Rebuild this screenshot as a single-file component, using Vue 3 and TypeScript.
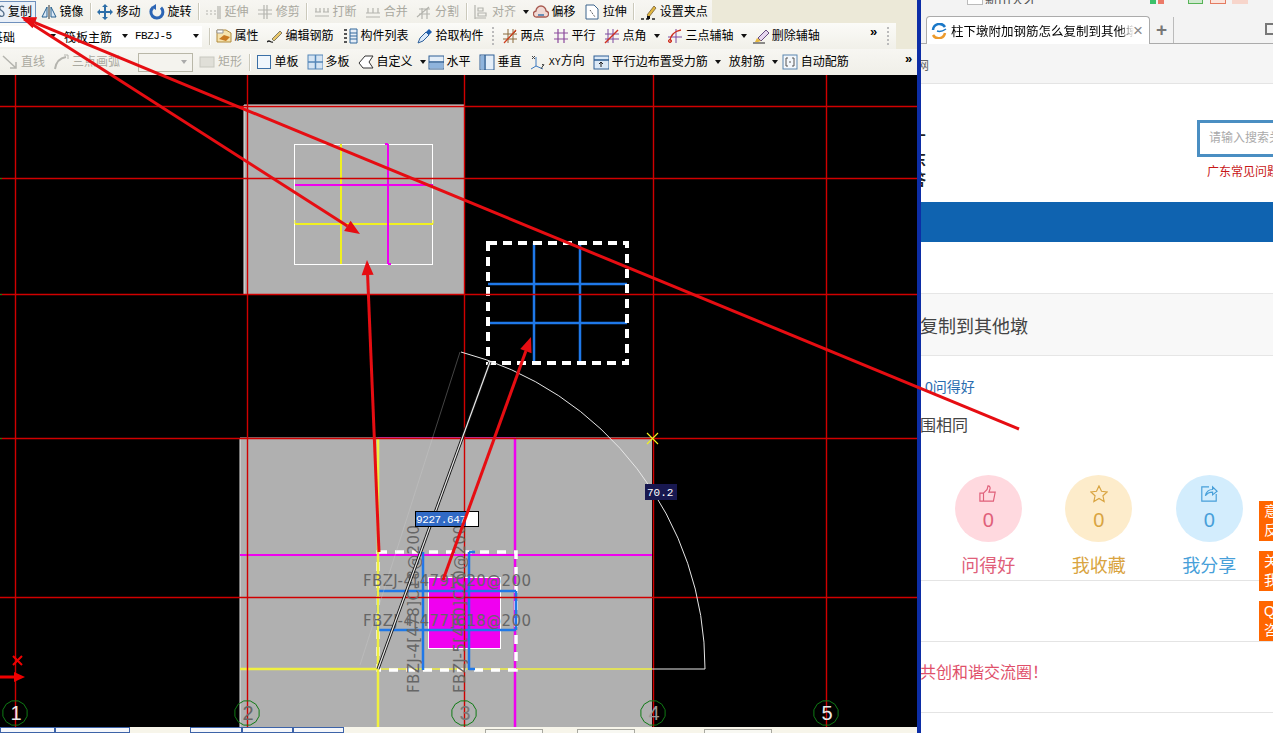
<script setup lang="ts">
interface Tool { t?: string; pre?: string; i?: string; off?: boolean; caret?: number; sep?: boolean; grip?: boolean; active?: boolean }

const G = 'fill="none" stroke="#b4b4ae" stroke-width="1.2"'
const icons: Record<string, string> = {
  copy: `<path d="M15 3c-3-2-5 0-4 2s4 2 4 5-3 3-5 1" fill="none" stroke="#56708c" stroke-width="1.4"/>`,
  mirror: `<path d="M8 1v14" stroke="#333"/><path d="M6 3v10H1z" fill="#dbe8f6" stroke="#26608f"/><path d="M10 3v10h5z" fill="#dbe8f6" stroke="#26608f"/>`,
  move: `<path d="M8 1v14M1 8h14" stroke="#2d6ea8" stroke-width="2"/><path d="M8 0l3 3H5zM8 16l3-3H5zM0 8l3-3v6zM16 8l-3-3v6z" fill="#2d6ea8"/>`,
  rotate: `<path d="M4 3.5a6 6 0 1 0 8 .2" fill="none" stroke="#2c65b4" stroke-width="3"/><path d="M7 0v6L2.5 3z" fill="#2c65b4"/>`,
  extend: `<path d="M1 7h2M5 7h2M9 7h2M1 10h2M5 10h2M9 10h2M13 2v13M15 2v13" ${G}/>`,
  trim: `<path d="M7 1v14M10 1v14M1 6h14M1 10h14" ${G}/>`,
  break: `<path d="M2 4v4M6 4v4M1 8h6M10 4v4M14 4v4M9 8h6M1 12h14" ${G}/>`,
  merge: `<path d="M3 4v5M8 4v5M13 4v5M1 9h14M1 13h14" ${G}/>`,
  split: `<path d="M1 13L13 3M3 5h11M3 10h11M6 15V4M11 15V4" ${G}/>`,
  align: `<path d="M2 1v14M2 14h11M5 4h5v3H5zM5 9h8v3H5z" ${G}/>`,
  offset: `<path d="M4 13a3 3 0 0 1-1-6 5 5 0 0 1 10 0 3 3 0 0 1-1 6z" fill="#f0d9d4" stroke="#a85a50" stroke-width="1.3"/><path d="M5 11h6" stroke="#2d6ea8" stroke-width="1.4"/>`,
  stretch: `<path d="M2 1h8l4 4v10H2z" fill="#fff" stroke="#3c648c"/><path d="M6 6l5 7" stroke="#333" stroke-dasharray="1 1"/>`,
  grip: `<path d="M6 11L13 2l2 2-7 9z" fill="#e2b73e" stroke="#76603a" stroke-width=".8"/><path d="M0 15h3M5 15h3M11 15h3" stroke="#222" stroke-width="1.4"/><rect x="6" y="12" width="3" height="3" fill="#111"/>`,
  attr: `<path d="M1 2h9l5 3v9H1z" fill="#f6e3ae" stroke="#b18a3a"/><path d="M3 11l5-4 6 2-4 4z" fill="#c97a22"/><path d="M1 2h6v3H1z" fill="#fff" stroke="#999"/>`,
  edit: `<path d="M5 11l8-8 2 2-8 8z" fill="#e8c66a" stroke="#665" stroke-width=".8"/><path d="M0 14c3-3 3 1 6 0" fill="none" stroke="#222" stroke-width="1.3"/>`,
  list: `<path d="M2 2h3M2 6h3M2 10h3M2 14h3" stroke="#555" stroke-width="2"/><path d="M8 1h7v14H8z" fill="#e6eef7" stroke="#33689c"/><path d="M8 5h7M8 8h7M8 11h7" stroke="#33689c"/>`,
  pick: `<path d="M1 15l2-5 6-6 3 3-6 6z" fill="#dbeafa" stroke="#2d5f9a"/><path d="M9 4l3-3 3 3-3 3z" fill="#1f5fb0"/>`,
  two: `<path d="M3 14L14 3M6 1v14M11 1v14M1 6h14M1 11h14" stroke="#8a6a3c"/><path d="M2 15L14 2" stroke="#d04020" stroke-width="1.2"/>`,
  para: `<path d="M5 1v14M11 1v14M1 5h14M1 11h14" stroke="#8b4a9c" stroke-width="1.2"/>`,
  angle: `<path d="M4 1v14M9 1v14M1 6h14M1 11h14" stroke="#7d4a9e"/><path d="M1 15L14 2" stroke="#d03020" stroke-width="1.4"/>`,
  three: `<path d="M9 1v14M1 9h14" fill="none" stroke="#7d4a9e"/><path d="M3 14C3 7 8 3 14 2" fill="none" stroke="#d03020" stroke-width="1.3"/><circle cx="3" cy="13" r="1.6" fill="none" stroke="#d03020"/>`,
  erase: `<path d="M5 10l8-8 3 3-8 8z" fill="#e6d6ef" stroke="#664d80"/><path d="M4 10l4 3-3 1H2z" fill="#e8b93e"/><path d="M0 15h12" stroke="#222"/>`,
  line: `<path d="M1 2l13 12M14 8v6H8" fill="none" stroke="#b4b4ae" stroke-width="1.5"/>`,
  arc: `<path d="M2 15C3 8 7 4 13 3" fill="none" stroke="#b4b4ae" stroke-width="2"/><path d="M11 1h4v4" fill="none" stroke="#b4b4ae"/>`,
  rect: `<rect x="1" y="3" width="14" height="10" fill="#e0dfd8" stroke="#c8c8c0"/>`,
  single: `<rect x="1.5" y="1.5" width="13" height="13" fill="#f0f6fc" stroke="#3b6fa6"/>`,
  multi: `<rect x="1" y="1" width="15" height="14" fill="#d5e4f3" stroke="#5586b8"/><path d="M8.500 1v14M1 8h15" stroke="#5586b8" stroke-width="1.5"/>`,
  custom: `<path d="M1 9L7 2h8l-4 6 4 6H5z" fill="#fff" stroke="#333"/>`,
  hor: `<rect x="1" y="2" width="15" height="13" fill="#e4eef8" stroke="#2f5f95"/><path d="M1 8h15" stroke="#2f5f95" stroke-width="1.500"/><rect x="2" y="9" width="13" height="5" fill="#8fb4dc"/>`,
  ver: `<rect x="1" y="1" width="14" height="15" fill="#e4eef8" stroke="#2f5f95"/><path d="M6 1v15" stroke="#2f5f95" stroke-width="1.500"/><rect x="2" y="2" width="3" height="13" fill="#8fb4dc"/>`,
  xy: `<path d="M6 3v9l7 3M6 12l-5 3" fill="none" stroke="#3a78c0"/><path d="M2 2l3 3M5 2L2 5" stroke="#444"/><path d="M12 10l2 2M14 10l-3 5" stroke="#444"/>`,
  parallel: `<rect x="1" y="2" width="15" height="13" fill="#dce9f6" stroke="#2f5f95"/><path d="M1 6h15" stroke="#2f5f95" stroke-width="1.500"/><path d="M8 8v5M6 10l2-2 2 2" fill="none" stroke="#222"/>`,
  auto: `<rect x="1" y="1" width="14" height="14" fill="#f3f7fb" stroke="#5a86b0"/><path d="M6 4H4v8h2M10 4h2v8h-2M7 8h2" fill="none" stroke="#555"/>`,
}

const row1: Tool[] = [
  { t: '复制', i: 'copy', active: true },
  { t: '镜像', i: 'mirror' },
  { sep: true },
  { t: '移动', i: 'move' },
  { t: '旋转', i: 'rotate' },
  { sep: true },
  { t: '延伸', i: 'extend', off: true },
  { t: '修剪', i: 'trim', off: true },
  { sep: true },
  { t: '打断', i: 'break', off: true },
  { t: '合并', i: 'merge', off: true },
  { t: '分割', i: 'split', off: true },
  { sep: true },
  { t: '对齐', i: 'align', off: true, caret: -4.5 },
  { t: '偏移', i: 'offset' },
  { t: '拉伸', i: 'stretch' },
  { sep: true },
  { t: '设置夹点', i: 'grip' },
]
const row2: Tool[] = [
  { t: '属性', i: 'attr' },
  { t: '编辑钢筋', i: 'edit' },
  { t: '构件列表', i: 'list' },
  { t: '拾取构件', i: 'pick' },
  { grip: true },
  { t: '两点', i: 'two' },
  { t: '平行', i: 'para' },
  { t: '点角', i: 'angle', caret: -1 },
  { t: '三点辅轴', i: 'three', caret: -2 },
  { t: '删除辅轴', i: 'erase' },
]
const row3a: Tool[] = [
  { t: '直线', i: 'line', off: true },
  { t: '三点画弧', i: 'arc', off: true },
]
const row3b: Tool[] = [
  { t: '矩形', i: 'rect', off: true },
  { sep: true },
  { t: '单板', i: 'single' },
  { t: '多板', i: 'multi' },
  { t: '自定义', i: 'custom', caret: -6 },
  { t: '水平', i: 'hor' },
  { t: '垂直', i: 'ver' },
  { pre: 'XY', t: '方向', i: 'xy' },
  { t: '平行边布置受力筋', i: 'parallel', caret: 0 },
  { t: '放射筋', caret: -4 },
  { t: '自动配筋', i: 'auto' },
]

const gridX = [15, 247, 464, 653, 826]
const gridY = [106, 178, 294, 438, 597]
const axes = [
  { x: 15, n: '1', c: '#e8e8e8' },
  { x: 247, n: '2', c: '#666' },
  { x: 464, n: '3', c: '#777' },
  { x: 653, n: '4', c: '#999' },
  { x: 826, n: '5', c: '#e8e8e8' },
]

function polygonPoints(cx: number, r: number): string {
  const pts: string[] = []
  for (let k = 0; k < 12; k++) {
    const a = (k * Math.PI) / 6 + Math.PI / 12
    pts.push(`${(cx + r * Math.cos(a)).toFixed(1)},${(713 + r * Math.sin(a)).toFixed(1)}`)
  }
  return pts.join(' ')
}

function arrow(x1: number, y1: number, x2: number, y2: number) {
  const len = Math.hypot(x2 - x1, y2 - y1)
  const ux = (x2 - x1) / len
  const uy = (y2 - y1) / len
  const bx = x2 - ux * 15
  const by = y2 - uy * 15
  return {
    x1, y1, x2: bx, y2: by,
    head: `${x2},${y2} ${bx - uy * 6},${by + ux * 6} ${bx + uy * 6},${by - ux * 6}`,
  }
}
const arrows = [
  arrow(1019, 429, 21, 17),
  arrow(24, 19, 360, 234),
  arrow(379, 552, 367, 260),
  arrow(443, 580, 531, 337),
]
const statusA = [55, 75]
const statusB = [52, 51, 51]
const stats = [
  { label: '问得好', cls: 'pink' },
  { label: '我收藏', cls: 'gold' },
  { label: '我分享', cls: 'sky' },
]
</script>

<template>
  <div class="screen">
    <section class="cad">
      <div class="bar bar1">
        <div class="strip strip1">
          <template v-for="(x, n) in row1" :key="n">
            <span v-if="x.sep" class="sep"></span>
            <span v-else class="tool" :class="{ off: x.off, active: x.active }">
              <svg class="ico" viewBox="0 0 16 16" v-html="icons[x.i!]"></svg>
              <span>{{ x.t }}</span><i v-if="x.caret !== undefined" class="caret" :style="{ marginRight: x.caret + 'px' }"></i>
            </span>
          </template>
        </div>
      </div>
      <div class="bar bar2">
        <div class="strip strip2">
          <span class="combo c1"><span>基础</span><i class="caret"></i></span>
          <span class="combo c2"><span>筏板主筋</span><i class="caret"></i></span>
          <span class="combo c3"><span class="mono">FBZJ-5</span><i class="caret"></i></span>
          <span class="sep"></span>
          <template v-for="(x, n) in row2" :key="n">
            <span v-if="x.grip" class="grip"></span>
            <span v-else class="tool">
              <svg class="ico" viewBox="0 0 16 16" v-html="icons[x.i!]"></svg>
              <span>{{ x.t }}</span><i v-if="x.caret !== undefined" class="caret" :style="{ marginRight: x.caret + 'px' }"></i>
            </span>
          </template>
          <span class="more">»</span>
          <span class="grip end"></span>
        </div>
      </div>
      <div class="bar bar3">
        <span v-for="x in row3a" :key="x.t" class="tool off">
          <svg class="ico" viewBox="0 0 16 16" v-html="icons[x.i!]"></svg>
          <span>{{ x.t }}</span>
        </span>
        <span class="select"><i class="caret light"></i></span>
        <template v-for="(x, n) in row3b" :key="n">
          <span v-if="x.sep" class="sep"></span>
          <span v-else class="tool" :class="{ off: x.off }">
            <svg v-if="x.i" class="ico" viewBox="0 0 16 16" v-html="icons[x.i]"></svg>
            <span><span v-if="x.pre" class="narrow">{{ x.pre }}</span>{{ x.t }}</span><i v-if="x.caret !== undefined" class="caret" :style="{ marginRight: x.caret + 'px' }"></i>
          </span>
        </template>
        <span class="more third">»</span>
      </div>

      <svg class="canvas" viewBox="0 75 917 652" width="917" height="652">
        <rect x="0" y="75" width="917" height="652" fill="#000" />
        <rect x="244" y="105" width="221" height="189" fill="#b0b0b0" />
        <rect x="240" y="438" width="412" height="289" fill="#b0b0b0" />
        <path d="M244 105h221M244 105v189M240 438h412M240 438v289" stroke="#e8e8e8" fill="none" />

        <rect x="294.500" y="144.500" width="138" height="120" fill="none" stroke="#fff" />
        <path d="M295 224h138M341 144v120" stroke="#f0f020" stroke-width="2" fill="none" />
        <path d="M295 185h138M388 144v120M388 144h-3M388 264h3" stroke="#f000f0" stroke-width="2" fill="none" />
        <path d="M295 224v-4M433 224v-4" stroke="#f0f020" />

        <path d="M534 243v120M580 243v120M488 284h139M488 323h139" stroke="#1f78e8" stroke-width="2.500" fill="none" />
        <rect x="488" y="243" width="139" height="120" fill="none" stroke="#fff" stroke-width="4" stroke-dasharray="9 6" />

        <path d="M378 669h274" stroke="#f0f040" stroke-width="1.500" />
        <path d="M240 555h412" stroke="#f000f0" stroke-width="2" />
        <path d="M515 438v289" stroke="#f000f0" stroke-width="2.500" />
        <path d="M378 438h138" stroke="#f000f0" stroke-width="1" />

        <rect x="428.500" y="577.500" width="72" height="71" fill="#f000f0" stroke="#fff" />
        <rect x="378" y="552" width="138" height="118" fill="none" stroke="#fff" stroke-width="3.500" stroke-dasharray="9 8" />
        <path d="M423 552v118M469 552v118M469 552h6M469 669h6M378 591h138M378 630h138M378 591v39M516 591v39" stroke="#1f78e8" stroke-width="2.500" fill="none" />
        <path d="M378 438v289" stroke="#f0f040" stroke-width="2.500" />
        <path d="M240 669h138" stroke="#f0f040" stroke-width="2.500" />

        <g stroke="#d00000" stroke-width="1.400">
          <path v-for="x in gridX" :key="x" :d="`M${x + 0.5} 75v652`" />
          <path v-for="y in gridY" :key="y" :d="`M0 ${y + 0.5}h917`" />
        </g>
        <path d="M0 178.500h2M0 294.500h2M0 438.500h2" stroke="#0c8a10" />

        <g class="cadtext">
          <text x="363" y="586" textLength="168">FBZJ-4[479]C20@200</text>
          <text x="363" y="626" textLength="168">FBZJ-4[477]C18@200</text>
          <text transform="translate(419 693) rotate(-90)" textLength="168">FBZJ-4[478]C18@200</text>
          <text transform="translate(465 693) rotate(-90)" textLength="168">FBZJ-5[480]C20@200</text>
        </g>

        <path d="M360 665L460 352" stroke="#cfcfcf" stroke-width=".6" opacity=".55" />
        <path d="M461 352A327 327 0 0 1 705 669H652" fill="none" stroke="#e6e6e6" stroke-width="1" />
        <path d="M378 669L490 362" stroke="#111" stroke-width="3" />
        <path d="M378 669L490 362" stroke="#e8e8e8" stroke-width="1.200" />
        <path d="M647 433l11 11M658 433l-11 11" stroke="#f0f020" stroke-width="1.200" />

        <rect x="645" y="484" width="32" height="16" fill="#181850" />
        <text x="647" y="496" class="dim">70.2</text>
        <rect x="415.500" y="511.500" width="63" height="15" fill="#fff" stroke="#000" />
        <rect x="416" y="512" width="50" height="14" fill="#316ac5" />
        <text x="416" y="523" class="dim" textLength="50">9227.647</text>

        <path d="M13 656l9 9M22 656l-9 9" stroke="#f00000" stroke-width="2" />
        <path d="M0 677h16" stroke="#f00000" stroke-width="3" />
        <path d="M14 672l11 5-11 5z" fill="#f00000" />

        <g v-for="a in axes" :key="a.n">
          <polygon :points="polygonPoints(a.x, 12.500)" fill="none" stroke="#0f7a14" />
          <text :x="a.x + 1" y="720" class="axisnum" :fill="a.c">{{ a.n }}</text>
        </g>
      </svg>
      <div class="status">
        <span v-for="(w, n) in statusA" :key="n" class="cell" :style="{ width: w + 'px' }"></span>
        <span class="gapA"></span>
        <span v-for="(w, n) in statusB" :key="'b' + n" class="cell" :style="{ width: w + 'px' }"></span>
        <span class="gapB"></span>
        <span class="field f1"></span><span class="field f2"></span><span class="field f3"></span>
      </div>
    </section>

    <section class="browser">
      <div class="chrome">
        <span class="chip box"></span><span class="chiptext">新出天才</span>
        <span class="chip green"></span><span class="chip red"></span>
        <span class="chip leaf"></span><span class="chip outline"></span><span class="chip pale"></span>
      </div>
      <div class="tabs">
        <div class="tab">
          <svg class="logo" viewBox="0 0 16 16">
            <path d="M2 7a6.500 6.500 0 0 1 12-3" fill="none" stroke="#1a78c8" stroke-width="2.500" />
            <path d="M14 10a6.500 6.500 0 0 1-12 2" fill="none" stroke="#ec9a2c" stroke-width="2.500" />
            <path d="M6 8c3 1 6 0 9-2" fill="none" stroke="#1a78c8" stroke-width="1.500" />
          </svg>
          <span class="tabtitle">柱下墩附加钢筋怎么复制到其他墩</span>
          <span class="tabx">×</span>
        </div>
        <span class="plus">+</span>
        <span class="winicon"></span>
      </div>
      <div class="favs"><span>网</span></div>
      <header class="head">
        <div class="logocut"><span>广</span><span>东</span><span>答</span></div>
        <div class="search">
          <div class="input">请输入搜索关键词</div>
          <div class="hint">广东常见问题</div>
        </div>
      </header>
      <div class="band"></div>
      <div class="spacer"></div>
      <h1 class="qtitle">复制到其他墩</h1>
      <div class="qbody">
        <div class="meta">0问得好</div>
        <p class="desc">围相同</p>
        <div class="stats">
          <div v-for="(s, n) in stats" :key="s.label" class="stat" :class="s.cls">
            <div class="disc">
              <svg v-if="n === 0" class="sic" viewBox="0 0 20 20"><path d="M1 9h4v9H1zM5 9l4-4 1-4c2 0 3 2 2 4l-1 3h7l-2 10H5" /></svg>
              <svg v-else-if="n === 1" class="sic" viewBox="0 0 20 20"><path d="M10 1l2.800 6 6.200.7-4.600 4.300 1.300 6.300L10 15l-5.700 3.300 1.300-6.300L1 7.700 7.200 7z" /></svg>
              <svg v-else class="sic" viewBox="0 0 20 20"><path d="M18 10v8H2V2h8M6 12c1-5 4-7 8-7V2l5 5-5 4V8c-3 0-6 1-8 4z" /></svg>
              <span class="num">0</span>
            </div>
            <div class="lab">{{ s.label }}</div>
          </div>
        </div>
      </div>
      <div class="blank"></div>
      <div class="slogan">共创和谐交流圈！</div>
      <div class="tailrow"></div>
      <aside class="side">
        <div class="sb"><span>意</span><span>反</span></div>
        <div class="sb"><span>关</span><span>我</span></div>
        <div class="sb"><span>Q</span><span>咨</span></div>
      </aside>
    </section>

    <svg class="overlay" viewBox="0 0 1273 733" width="1273" height="733">
      <g v-for="(a, n) in arrows" :key="n">
        <line :x1="a.x1" :y1="a.y1" :x2="a.x2" :y2="a.y2" stroke="#e60d12" stroke-width="3" />
        <polygon :points="a.head" fill="#e60d12" />
      </g>
    </svg>
  </div>
</template>

<style scoped>
.screen {
  position: relative;
  width: 1273px;
  height: 733px;
  display: flex;
  overflow: hidden;
  background: #fff;
  font-family: "Liberation Sans", "Noto Sans CJK SC", sans-serif;
  font-size: 12px;
  color: #000;
}
.cad {
  width: 917px;
  flex: none;
  display: flex;
  flex-direction: column;
  background: #ece9d8;
}
.bar {
  display: flex;
  align-items: center;
  white-space: nowrap;
  overflow: hidden;
  flex: none;
}
.bar1 { height: 23px; }
.bar2 { height: 26px; }
.bar3 { height: 26px; background: linear-gradient(#f7f6f2, #f0efe8); padding-left: 2px; gap: 8px; position: relative; }
.strip { display: flex; align-items: center; height: 100%; }
.strip1 { width: 712px; background: linear-gradient(#f7f6f2, #f1f0e9); gap: 8.200px; }
.strip2 { width: 896px; background: linear-gradient(#fbfbf8, #f1f0e9); gap: 8px; position: relative; }
.tool { display: inline-flex; align-items: center; gap: 3px; line-height: 16px; flex: none; }
.tool.off { color: #aaa9a0; }
.tool.active {
  height: 22px;
  width: 36px;
  margin-right: -3.700px;
  background: #eaf0f8;
  border: 1px solid #6f90bd;
  border-left: 0;
  box-sizing: border-box;
  overflow: hidden;
}
.tool.active .ico { margin-left: -11px; }
.ico { width: 16px; height: 16px; flex: none; overflow: hidden; }
.narrow { font-family: "Liberation Mono", monospace; font-size: 10px; }
.caret {
  display: inline-block;
  width: 0;
  height: 0;
  margin-left: 4px;
  border: 3px solid transparent;
  border-top: 4px solid #111;
  border-bottom: 0;
  flex: none;
}
.caret.light { border-top-color: #aaa; margin-left: 0; }
.sep { width: 1px; height: 17px; margin: 0 -3px 0 -1.500px; background: #cbc9bb; border-right: 1px solid #fff; flex: none; }
.grip { width: 2px; height: 18px; flex: none; background: repeating-linear-gradient(#bbb 0 2px, transparent 2px 4px); }
.combo { display: flex; align-items: center; justify-content: space-between; flex: none; height: 21px; background: #fff; overflow: hidden; box-sizing: border-box; }
.combo .caret { margin: 0; }
.c1 { width: 60px; padding-right: 4px; margin-right: -8px; }
.c1 span { margin-left: -9px; }
.c2 { width: 74px; padding: 0 5px; margin: 0 -8px 0 -1px; }
.c3 { width: 69px; padding: 0 3px 0 2px; }
.mono { font-family: "Liberation Mono", monospace; font-size: 11px; letter-spacing: -.5px; }
.more { position: absolute; left: 870px; top: 1px; font-size: 13px; font-weight: 700; line-height: 16px; }
.grip.end { position: absolute; left: 887px; top: 4px; }
.more.third { left: 905px; top: 2px; }
.select {
  width: 55px;
  height: 19px;
  margin: 0 -2px 0 10px;
  box-sizing: border-box;
  border: 1px solid #b9b7a8;
  background: #f4f3ee;
  flex: none;
  display: flex;
  align-items: center;
  justify-content: flex-end;
  padding-right: 5px;
}
.canvas { display: block; flex: none; }
.status { height: 6px; display: flex; background: #f7f5ea; align-items: flex-start; overflow: hidden; }
.cell { height: 6px; box-sizing: border-box; border: 1px solid #3d63a8; background: #f5f7fb; flex: none; }
.gapA { width: 60px; flex: none; }
.gapB { width: 141px; flex: none; }
.field { height: 6px; box-sizing: border-box; border: 1px solid #a8a8a0; background: #f8f8f2; flex: none; margin-top: 2px; }
.f1 { width: 58px; }
.f2 { width: 58px; margin-left: 34px; }
.f3 { width: 68px; margin-left: 69px; }
.cadtext text { font-family: "DejaVu Sans", sans-serif; font-size: 15px; fill: #666; }
.dim { font-family: "Liberation Mono", monospace; font-size: 11px; fill: #fff; }
.axisnum { font-family: "Liberation Sans", sans-serif; font-size: 20px; text-anchor: middle; }

.browser {
  position: relative;
  width: 356px;
  flex: none;
  box-sizing: border-box;
  border-left: 4px solid #0c2da6;
  display: flex;
  flex-direction: column;
  overflow: hidden;
  background: #fff;
}
.chrome { height: 16px; background: #f3f3f3; display: flex; align-items: flex-start; overflow: hidden; flex: none; position: relative; }
.chip { height: 4px; flex: none; }
.box { width: 16px; height: 5px; margin-left: 46px; background: #fff; border: 1px solid #bbb; border-top: 0; box-sizing: border-box; }
.chiptext { margin-left: 2px; height: 4px; overflow: hidden; font-size: 13px; line-height: 0; color: #555; width: 52px; flex: none; }
.green { width: 6px; background: #3cc16a; margin-left: 113px; }
.red { width: 6px; background: #ec7a68; margin-left: 2px; }
.leaf { width: 15px; background: #cfe9cf; border: 1px solid #56b356; border-top: 0; box-sizing: border-box; margin-left: 24px; }
.outline { width: 16px; background: #fbe4dc; border: 1px solid #e47b60; border-top: 0; box-sizing: border-box; margin-left: 7px; }
.pale { width: 16px; background: #f7d5cb; margin-left: 6px; }
.tabs { height: 28px; background: #f3f3f3; border-bottom: 1px solid #ababab; box-sizing: border-box; display: flex; align-items: flex-end; flex: none; position: relative; padding-left: 5px; }
.tab {
  width: 224px;
  height: 28px;
  box-sizing: border-box;
  margin-bottom: -1px;
  background: #fff;
  border: 1px solid #ababab;
  border-bottom: 0;
  border-radius: 4px 4px 0 0;
  display: flex;
  align-items: center;
  padding-left: 4px;
  flex: none;
}
.logo { width: 16px; height: 16px; flex: none; }
.tabtitle {
  margin-left: 4px;
  width: 183px;
  overflow: hidden;
  white-space: nowrap;
  font-size: 12.500px;
  flex: none;
  -webkit-mask-image: linear-gradient(90deg, #000 92%, transparent);
  mask-image: linear-gradient(90deg, #000 92%, transparent);
}
.tabx { margin-left: -1px; color: #888; font-size: 17px; line-height: 16px; }
.plus { width: 24px; border-right: 1px solid #bbb; height: 26px; text-align: center; font: 700 19px/26px "Liberation Sans", sans-serif; color: #777; flex: none; box-sizing: border-box; }
.winicon { margin-left: 91px; margin-bottom: 8px; width: 12px; height: 12px; border: 2px solid #777; box-sizing: border-box; flex: none; }
.favs { height: 40px; background: #f5f5f5; border-bottom: 1px solid #e4e4e4; box-sizing: border-box; display: flex; align-items: center; padding-left: 0; color: #666; flex: none; font-size: 12px; overflow: hidden; }
.favs span { margin-left: -4px; margin-top: 1px; }
.head { height: 118px; flex: none; display: flex; position: relative; overflow: hidden; }
.logocut { width: 5px; display: flex; flex-direction: column; padding-top: 46px; overflow: hidden; flex: none; color: #222; font-weight: 700; font-size: 15px; line-height: 20px; }
.logocut span { margin-left: -10px; }
.search { margin-left: 271px; padding-top: 36px; flex: none; width: 100px; }
.input { height: 37px; width: 130px; box-sizing: border-box; border: 3px solid #4a8ec2; border-right: 0; padding-left: 9px; line-height: 31px; color: #aaa; white-space: nowrap; }
.hint { margin: 8px 0 0 10px; color: #c81818; line-height: 14px; white-space: nowrap; width: 120px; }
.band { height: 40px; background: #0f63b0; flex: none; }
.spacer { height: 51px; flex: none; }
.qtitle { margin: 0; height: 63px; box-sizing: border-box; background: #f8f8f8; border-top: 1px solid #e6e6e6; border-bottom: 1px solid #e6e6e6; font-size: 18px; font-weight: 400; line-height: 66px; color: #444; text-indent: -1px; flex: none; overflow: hidden; }
.qbody { height: 225px; box-sizing: border-box; border-bottom: 1px solid #e4e4e4; padding-top: 23px; flex: none; }
.meta { padding-left: 4px; font-size: 14px; line-height: 16px; color: #2a6db0; }
.desc { margin: 21px 0 0 -1px; font-size: 16px; line-height: 20px; color: #444; }
.stats { display: flex; margin: 39px 0 0 12px; }
.stat { width: 110.500px; display: flex; flex-direction: column; align-items: center; }
.disc { width: 67px; height: 67px; border-radius: 50%; display: flex; flex-direction: column; align-items: center; padding-top: 10px; box-sizing: border-box; }
.sic { width: 18px; height: 18px; fill: none; stroke: currentColor; stroke-width: 1.300; flex: none; }
.num { font-size: 20px; line-height: 26px; margin-top: 4px; }
.lab { font-size: 18px; line-height: 26px; margin-top: 11px; }
.pink .disc { background: #ffd9df; }
.pink { color: #e0607a; }
.gold .disc { background: #fdeccb; }
.gold { color: #d9a441; }
.sky .disc { background: #d3edfd; }
.sky { color: #479fd9; }
.blank { height: 61px; border-bottom: 1px solid #e4e4e4; box-sizing: border-box; flex: none; }
.slogan { height: 71px; box-sizing: border-box; border-bottom: 1px solid #e4e4e4; font-size: 16px; line-height: 62px; color: #e0506a; text-indent: -1px; flex: none; overflow: hidden; }
.tailrow { flex: 1; }
.side { position: absolute; left: 338px; top: 501px; display: flex; flex-direction: column; gap: 10px; }
.sb { width: 14px; height: 40px; background: #ff6600; color: #fff; font-size: 14px; line-height: 19px; overflow: hidden; padding: 1px 0 0 5px; box-sizing: border-box; white-space: nowrap; display: flex; flex-direction: column; }
.overlay { position: absolute; left: 0; top: 0; pointer-events: none; }
</style>
